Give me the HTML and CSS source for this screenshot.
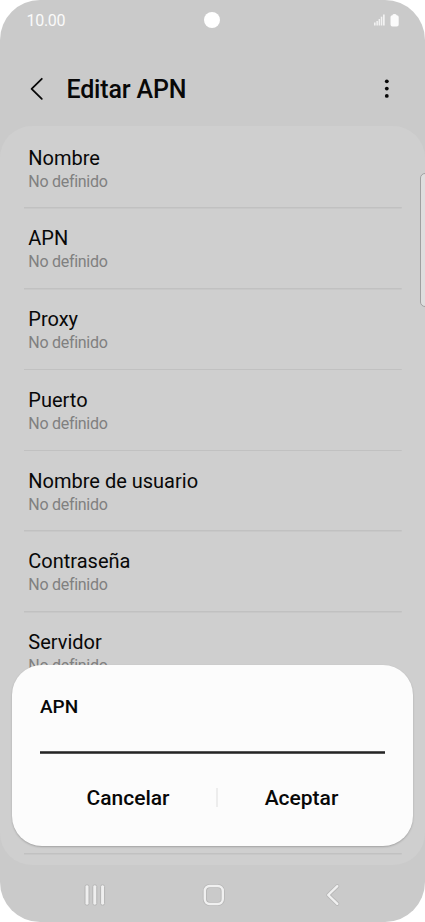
FILE: index.html
```html
<!DOCTYPE html>
<html lang="es">
<head>
<meta charset="utf-8">
<title>Editar APN</title>
<link rel="stylesheet" href="styles.css">
</head>
<body>
<div class="phone">
  <div class="status">
    <span class="time">10.00</span>
    <span class="camera"></span>
    <svg class="status-icons" width="28" height="14" viewBox="0 0 28 14">
      <g fill="#f2f2f2">
        <rect x="1" y="9.5" width="1.6" height="3"/><rect x="3.4" y="8" width="1.5" height="4.5"/><rect x="5.6" y="6" width="1.5" height="6.5"/><rect x="7.8" y="3.7" width="1.5" height="8.8"/><rect x="10" y="1.5" width="1.7" height="11"/>
      </g>
      <path fill="#fbfbfb" d="M19.4 2.2 Q19.6 1 21.4 1 Q23.4 1 23.7 2.2 Q25.7 2.3 25.7 4 V11.5 Q25.7 13.5 23.8 13.5 H19.4 Q17.5 13.5 17.5 11.5 V4 Q17.5 2.3 19.4 2.2Z"/>
    </svg>
  </div>
  <header class="bar">
    <svg class="back" width="14" height="24" viewBox="0 0 14 24"><path d="M11.8 1.8 L1.6 11.8 L11.8 21.8" fill="none" stroke="#080808" stroke-width="1.8" stroke-linecap="round" stroke-linejoin="round"/></svg>
    <h1>Editar APN</h1>
    <svg class="more" width="6" height="20" viewBox="0 0 6 20"><circle cx="2.8" cy="2.3" r="1.9"/><circle cx="2.8" cy="9.6" r="1.9"/><circle cx="2.8" cy="16.9" r="1.9"/></svg>
  </header>
  <main class="list">
    <div class="row"><span class="name">Nombre</span><span class="value">No definido</span></div>
    <div class="row"><span class="name">APN</span><span class="value">No definido</span></div>
    <div class="row"><span class="name">Proxy</span><span class="value">No definido</span></div>
    <div class="row"><span class="name">Puerto</span><span class="value">No definido</span></div>
    <div class="row"><span class="name">Nombre de usuario</span><span class="value">No definido</span></div>
    <div class="row"><span class="name">Contraseña</span><span class="value">No definido</span></div>
    <div class="row"><span class="name">Servidor</span><span class="value">No definido</span></div>
    <div class="row"></div>
    <div class="row"></div>
  </main>
  <nav class="nav">
    <svg width="24" height="24" viewBox="0 0 24 24"><g fill="#efefef" stroke="#b4b4b4" stroke-width="1"><rect x="2" y="1.8" width="4" height="20.4" rx="1.8"/><rect x="9.8" y="1.8" width="4" height="20.4" rx="1.8"/><rect x="17.6" y="1.8" width="4" height="20.4" rx="1.8"/></g></svg>
    <svg width="24" height="24" viewBox="0 0 24 24"><g fill="none"><rect x="2.8" y="3" width="18" height="18" rx="5" stroke="#b8b8b8" stroke-width="4.2"/><rect x="2.8" y="3" width="18" height="18" rx="5" stroke="#f0f0f0" stroke-width="2.4"/></g></svg>
    <svg width="24" height="24" viewBox="0 0 24 24"><g fill="none" stroke-linecap="round" stroke-linejoin="round"><path d="M16.3 3.2 L7.2 12 L16.3 20.8" stroke="#b8b8b8" stroke-width="4"/><path d="M16.3 3.2 L7.2 12 L16.3 20.8" stroke="#f0f0f0" stroke-width="2.4"/></g></svg>
  </nav>
  <div class="edge-handle"></div>
  <section class="dialog">
    <h2>APN</h2>
    <div class="field"></div>
    <div class="actions">
      <span class="cancel">Cancelar</span>
      <span class="separator"></span>
      <span class="accept">Aceptar</span>
    </div>
  </section>
</div>
</body>
</html>
```

FILE: styles.css
```css
* { box-sizing: border-box; }
body { margin: 0; background: #fff; font-family: Roboto, "Liberation Sans", sans-serif; color: #080808; }
.phone { position: relative; width: 425px; height: 922px; background: #cacaca; border-radius: 40px; overflow: hidden; display: flex; flex-direction: column; }
.status { height: 40px; flex: none; display: grid; grid-template-columns: 1fr 16px 1fr; align-items: center; padding: 0 25px 0 24px; }
.time { color: #fafafa; font-size: 16px; letter-spacing: -0.25px; line-height: 20px; padding: 1px 0 0 2.4px; }
.camera { width: 16px; height: 16px; border-radius: 50%; background: #fff; }
.status-icons { justify-self: end; position: relative; left: 1px; }
.bar { height: 86px; flex: none; display: flex; align-items: center; padding: 11px 35px 0 30px; }
.bar h1 { margin: 2px 0 0 22.4px; font-size: 25px; letter-spacing: -0.15px; line-height: 30px; font-weight: 500; }
.bar .more { margin-left: auto; fill: #080808; }
.list { height: 739px; flex: none; background: #cfcfcf; border-radius: 32px; padding: 2px 23.5px 0 24px; overflow: hidden; }
.row { height: 80.75px; padding: 17.5px 4.3px 0; display: flex; flex-direction: column; background: linear-gradient(#c1c1c1, #c1c1c1) bottom / 100% 1.5px no-repeat; }
.name { font-size: 20px; line-height: 25px; }
.value { font-size: 16px; letter-spacing: -0.28px; line-height: 22px; color: #808080; }
.nav { flex: 1; display: flex; justify-content: space-between; padding: 18px 80px 0 83px; }
.edge-handle { position: absolute; left: 420px; top: 173px; width: 10px; height: 134px; border: 1px solid #a0a0a0; border-radius: 5px; background: #dedede; }
.dialog { position: absolute; left: 12px; top: 665px; width: 401px; height: 181px; padding: 29px 28px 0; border-radius: 30px; background: #fcfcfc; box-shadow: 0 1px 2px rgba(0,0,0,.22); }
.dialog h2 { margin: 0; font-size: 19px; line-height: 25px; font-weight: 500; }
.field { height: 35px; background: linear-gradient(#555 0 1px, #252525 1px 2px, #555 2px) bottom / 100% 3px no-repeat; }
.actions { display: grid; grid-template-columns: 176px 2px 1fr; align-items: center; text-align: center; margin-top: 29px; font-size: 21px; line-height: 30px; font-weight: 500; }
.separator { height: 19px; margin-bottom: 2px; background: #ededed; }
```
